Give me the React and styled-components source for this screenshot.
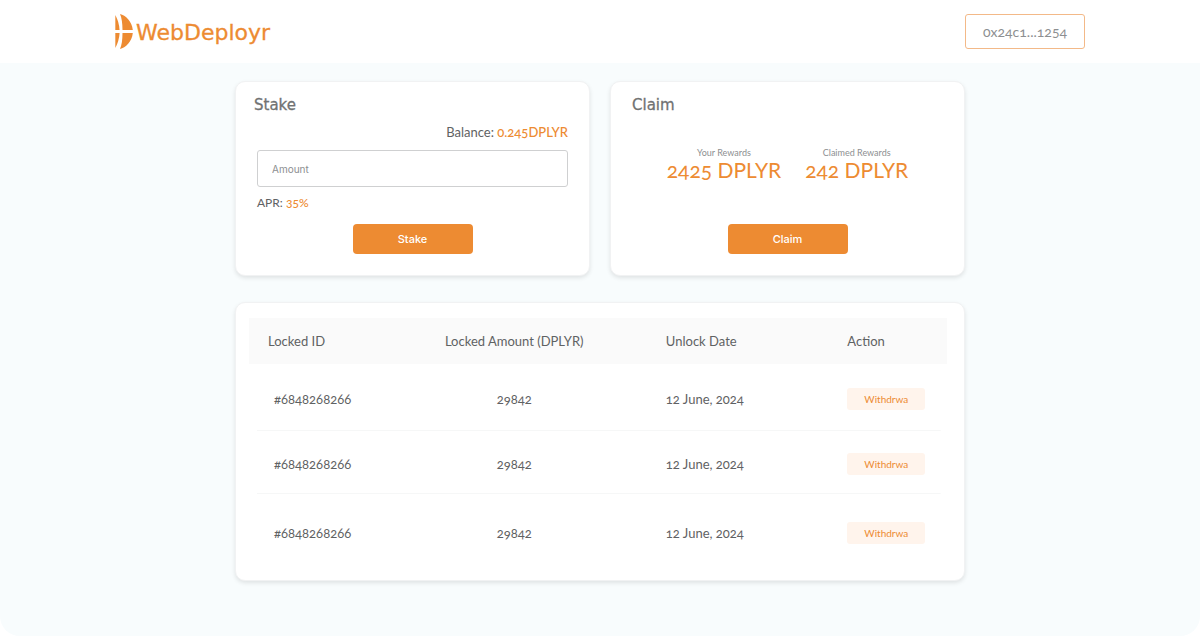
import React, { useState } from "react";
import styled, { createGlobalStyle, ThemeProvider } from "styled-components";

const theme = {
  colors: {
    orange: "#ed8b32",
    peach: "#fff4ec",
    text: "#5f6263",
    title: "#707273",
    muted: "#8d8f91",
    page: "#f8fcfd",
    white: "#ffffff",
  },
  fonts: {
    body: `Lato, "Open Sans", sans-serif`,
    wide: `"DejaVu Sans", Verdana, sans-serif`,
    control: `Inter, Roboto, sans-serif`,
  },
};

const GlobalStyle = createGlobalStyle`
  * {
    box-sizing: border-box;
  }
  body {
    margin: 0;
    background-color: #ffffff;
    font-variant-numeric: oldstyle-nums;
  }
  h1, h2, p {
    margin: 0;
    font-weight: 400;
  }
  button {
    cursor: pointer;
  }
`;

const Page = styled.div`
  min-height: 100vh;
  display: flex;
  flex-direction: column;
  font-family: ${({ theme }) => theme.fonts.body};
  color: ${({ theme }) => theme.colors.text};
`;

const Header = styled.header`
  background-color: ${({ theme }) => theme.colors.white};
  padding: 14px 16px 11px;
`;

const HeaderContainer = styled.div`
  display: flex;
  align-items: flex-start;
  justify-content: space-between;
  max-width: 970px;
  margin: 0 auto;
`;

const Logo = styled.a`
  display: flex;
  align-items: flex-start;
  gap: 2px;
  color: ${({ theme }) => theme.colors.orange};
  font-family: ${({ theme }) => theme.fonts.wide};
  font-size: 22px;
  line-height: 38px;
  text-decoration: none;
  -webkit-text-stroke: 0.3px;
`;

const WalletButton = styled.button`
  width: 120px;
  height: 35px;
  padding: 0;
  border: 1px solid #f3b988;
  border-radius: 3px;
  background-color: ${({ theme }) => theme.colors.white};
  color: ${({ theme }) => theme.colors.muted};
  font-family: inherit;
  font-size: 14px;
  font-variant-numeric: inherit;
`;

const Main = styled.main`
  flex: 1;
  padding: 18px 16px 32px;
  border-radius: 0 0 20px 20px;
  background-color: ${({ theme }) => theme.colors.page};
`;

const Content = styled.div`
  display: grid;
  grid-template-columns: repeat(auto-fit, minmax(300px, 1fr));
  gap: 26px 20px;
  max-width: 730px;
  margin: 0 auto;
`;

const Card = styled.section`
  display: flex;
  flex-direction: column;
  padding: 14px ${({ $gutter }) => $gutter}px 21px;
  border: 1px solid #f1f2f3;
  border-radius: 10px;
  background-color: ${({ theme }) => theme.colors.white};
  box-shadow: 0 2px 4px rgba(0, 0, 0, 0.1);
`;

const CardTitle = styled.h2`
  color: ${({ theme }) => theme.colors.title};
  font-family: ${({ theme }) => theme.fonts.wide};
  font-size: 15px;
  line-height: 18px;
  -webkit-text-stroke: 0.3px;
`;

const StakeForm = styled.form`
  display: flex;
  flex-direction: column;
  flex: 1;
  padding: 10px 3px 0;
`;

const Info = styled.p`
  font-size: ${({ $size }) => $size || 13}px;
  line-height: 16px;
  text-align: ${({ $align }) => $align || "left"};
`;

const Accent = styled.span`
  color: ${({ theme }) => theme.colors.orange};
  font-weight: 500;
`;

const AmountInput = styled.input`
  width: 100%;
  height: 37px;
  margin: 10px 0 8px;
  padding: 0 14px;
  border: 1px solid #cfd0d1;
  border-radius: 3px;
  font-family: ${({ theme }) => theme.fonts.control};
  font-size: 10px;

  &::placeholder {
    color: ${({ theme }) => theme.colors.muted};
  }
`;

const PrimaryButton = styled.button`
  align-self: center;
  width: 120px;
  height: 30px;
  margin-top: 13px;
  border: 0;
  border-radius: 4px;
  background-color: ${({ theme }) => theme.colors.orange};
  color: ${({ theme }) => theme.colors.white};
  font-family: ${({ theme }) => theme.fonts.control};
  font-size: 11px;
  font-weight: 500;
`;

const Rewards = styled.div`
  display: flex;
  flex: 1;
  justify-content: center;
  gap: 24px;
  padding-top: 34px;
`;

const Reward = styled.div`
  text-align: center;
`;

const RewardLabel = styled.p`
  color: ${({ theme }) => theme.colors.muted};
  font-size: 9px;
  line-height: 10px;
`;

const RewardValue = styled.p`
  color: ${({ theme }) => theme.colors.orange};
  font-size: 21px;
  line-height: 24px;
`;

const TableCard = styled(Card)`
  grid-column: 1 / -1;
  padding: 15px 17px 11px 13px;
`;

const LockTable = styled.table`
  width: 100%;
  table-layout: fixed;
  border-collapse: collapse;
  font-size: 13px;
`;

const HeadCell = styled.th`
  width: ${({ $width }) => $width};
  height: 46px;
  padding: 0 0 0 ${({ $center }) => ($center ? 0 : 19)}px;
  background-color: #fafafa;
  font-weight: 400;
  text-align: ${({ $center }) => ($center ? "center" : "left")};
  white-space: nowrap;
`;

const Row = styled.tr`
  height: ${({ $last }) => ($last ? 75 : 63)}px;
  background: ${({ $last }) =>
    $last
      ? "none"
      : "linear-gradient(#f6f7f7, #f6f7f7) no-repeat 8px 100% / calc(100% - 14px) 1px"};

  &:first-child {
    height: 67px;
  }
`;

const Cell = styled.td`
  padding: 2px 0 0 ${({ $indent }) => $indent || 0}px;
  text-align: ${({ $center }) => ($center ? "center" : "left")};
`;

const WithdrawButton = styled.button`
  display: block;
  width: 78px;
  height: 22px;
  padding: 0;
  border: 0;
  border-radius: 3px;
  background-color: ${({ theme }) => theme.colors.peach};
  color: ${({ theme }) => theme.colors.orange};
  font-family: inherit;
  font-size: 10px;
`;

const locks = [
  { key: 1, id: "#6848268266", amount: "29842", date: "12 June, 2024" },
  { key: 2, id: "#6848268266", amount: "29842", date: "12 June, 2024" },
  { key: 3, id: "#6848268266", amount: "29842", date: "12 June, 2024" },
];

const LogoMark = () => (
  <svg width="19" height="35" viewBox="0 0 19 35" fill="currentColor" stroke="none" aria-hidden="true">
    <path d="M0.300 1C2.500 5 4.200 10 4.600 16H0.300Z" />
    <path d="M5 0C10.500 1.500 17 7 17.800 16H7.500C7.400 9 6.800 4 5 0Z" />
    <path d="M0.300 34C2.500 30 4.200 25 4.600 19H0.300Z" />
    <path d="M5 35C10.500 33.500 17 28 17.800 19H7.500C7.400 26 6.800 31 5 35Z" />
  </svg>
);

const App = () => {
  const [amount, setAmount] = useState("");

  return (
    <ThemeProvider theme={theme}>
      <GlobalStyle />
      <Page>
        <Header>
          <HeaderContainer>
            <Logo href="#">
              <LogoMark />
              WebDeployr
            </Logo>
            <WalletButton type="button">0x24c1...1254</WalletButton>
          </HeaderContainer>
        </Header>
        <Main>
          <Content>
            <Card $gutter={18}>
              <CardTitle>Stake</CardTitle>
              <StakeForm onSubmit={(e) => e.preventDefault()}>
                <Info as="label" htmlFor="amount" $align="right">
                  Balance: <Accent>0.245DPLYR</Accent>
                </Info>
                <AmountInput
                  id="amount"
                  placeholder="Amount"
                  value={amount}
                  onChange={(e) => setAmount(e.target.value)}
                />
                <Info $size={12}>
                  APR: <Accent>35%</Accent>
                </Info>
                <PrimaryButton type="submit">Stake</PrimaryButton>
              </StakeForm>
            </Card>
            <Card $gutter={21}>
              <CardTitle>Claim</CardTitle>
              <Rewards>
                <Reward>
                  <RewardLabel>Your Rewards</RewardLabel>
                  <RewardValue>2425 DPLYR</RewardValue>
                </Reward>
                <Reward>
                  <RewardLabel>Claimed Rewards</RewardLabel>
                  <RewardValue>242 DPLYR</RewardValue>
                </Reward>
              </Rewards>
              <PrimaryButton type="button">Claim</PrimaryButton>
            </Card>
            <TableCard>
              <LockTable>
                <thead>
                  <tr>
                    <HeadCell $width="19%">Locked ID</HeadCell>
                    <HeadCell $width="38%" $center>
                      Locked Amount (DPLYR)
                    </HeadCell>
                    <HeadCell $width="26%">Unlock Date</HeadCell>
                    <HeadCell $width="17%">Action</HeadCell>
                  </tr>
                </thead>
                <tbody>
                  {locks.map((lock, index) => (
                    <Row key={lock.key} $last={index === locks.length - 1}>
                      <Cell $indent={25}>{lock.id}</Cell>
                      <Cell $center>{lock.amount}</Cell>
                      <Cell $indent={19}>{lock.date}</Cell>
                      <Cell $indent={19}>
                        <WithdrawButton type="button">Withdrwa</WithdrawButton>
                      </Cell>
                    </Row>
                  ))}
                </tbody>
              </LockTable>
            </TableCard>
          </Content>
        </Main>
      </Page>
    </ThemeProvider>
  );
};

export default App;
